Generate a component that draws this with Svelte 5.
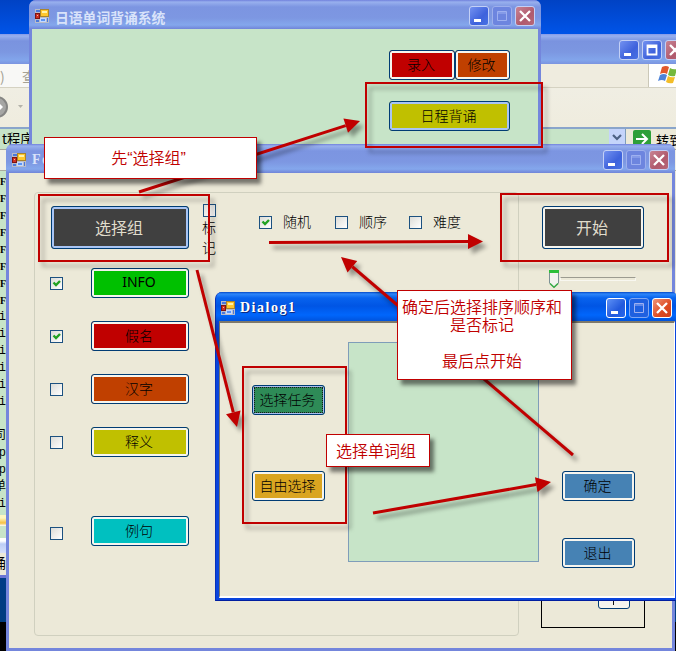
<script>
  const fields = [
    { label: 'INFO', color: '#00c000', checked: true, gap: 23 },
    { label: '假名', color: '#c00000', checked: true, gap: 23 },
    { label: '汉字', color: '#c04000', checked: false, gap: 23 },
    { label: '释义', color: '#c0c000', checked: false, gap: 59 },
    { label: '例句', color: '#00c0c0', checked: false, gap: 0 }
  ];
  const orders = [
    { label: '随机', checked: true },
    { label: '顺序', checked: false },
    { label: '难度', checked: false }
  ];
  const listing = ['F', 'F', 'F', 'F', 'F', 'F', 'F', 'F', 'i', 'i', 'i', 'i', 'i', 'i', '', '司', 'up', 'up', '单', 'bi'];

  // [x1, y1, x2, y2] from tail to tip
  const arrows = [
    [139, 192, 360, 121],
    [269, 242.5, 483, 241.5],
    [573, 455, 341, 257],
    [197, 270, 237, 427],
    [373, 513, 551, 482]
  ].map(([x1, y1, x2, y2]) => {
    const len = Math.hypot(x2 - x1, y2 - y1);
    const ux = (x2 - x1) / len;
    const uy = (y2 - y1) / len;
    const bx = x2 - ux * 15;
    const by = y2 - uy * 15;
    return {
      x1, y1, bx, by,
      head: `${x2},${y2} ${bx - uy * 7.5},${by + ux * 7.5} ${bx + uy * 7.5},${by - ux * 7.5}`
    };
  });
</script>

{#snippet controls(max)}
  <div class="controls">
    <span class="ctl"><svg width="18" height="18"><path d="M4 12h7v3H4z" fill="#fff" /></svg></span>
    <span class="ctl" class:dim={!max}>
      <svg width="18" height="18"><path d="M4.500 4.500h9v9h-9zM4.500 6h9" fill="none" stroke={max ? '#fff' : '#9eb0f0'} stroke-width={max ? 1.8 : 1} /></svg>
    </span>
    <span class="ctl close"><svg width="18" height="18"><path d="M4 4l10 10M14 4L4 14" stroke="#fff" stroke-width="2.300" /></svg></span>
  </div>
{/snippet}

{#snippet titlebar(text, latin)}
  <header class="title">
    <svg class="appicon" width="14" height="14" viewBox="0 0 14 14">
      <rect width="14" height="14" fill="#b9bcc8" />
      <path d="M1 1h4v2H1zM1 11h3v2H1zM12 9h1v4h-1z" fill="#4a78dc" />
      <rect x="5.500" y=".5" width="8" height="7" fill="#ffc72e" stroke="#a9842c" />
      <path d="M7 2h5v2H7z" fill="#fff2a8" />
      <rect x=".5" y="4.500" width="4" height="5" fill="#d03020" stroke="#7c1414" />
      <path d="M2 6h1v1H2z" fill="#ffb0a0" />
      <rect x="5.500" y="9.500" width="5" height="3" fill="#5a94f4" stroke="#c4d8ff" />
    </svg>
    <h1 class:latin>{text}</h1>
    {@render controls(false)}
  </header>
{/snippet}

{#snippet check(on)}
  <span class="check">
    {#if on}
      <svg width="11" height="11"><path d="M2.500 4.500L5 7l4-4" fill="none" stroke="#21a121" stroke-width="2.400" /></svg>
    {/if}
  </span>
{/snippet}

{#snippet button(label, color, kind)}
  <button class={kind} style:background-color={color}>{label}</button>
{/snippet}

<div class="desktop">
  <section class="browser">
    <div class="btitle">{@render controls(true)}</div>
    <div class="menu"><span class="paren">)</span><span>查</span>
      <div class="throbber">
        <svg width="22" height="20" viewBox="0 0 22 20">
          <path d="M4 2q4-2 7 0l-2 7q-3-2-7 0z" fill="#e2582b" /><path d="M12 3q3 2 7 1l-2 7q-4 1-7-1z" fill="#74b83c" />
          <path d="M2 10q4-2 7 0l-2 6q-3-2-7 0z" fill="#4c82d8" /><path d="M10 11q3 2 7 1l-2 6q-4 1-7-1z" fill="#f3bd28" />
        </svg>
      </div>
    </div>
    <div class="tools">
      <svg width="30" height="38">
        <circle cx="-3" cy="19" r="10" fill="#a6a6a4" stroke="#858583" stroke-width="2" />
        <path d="M-3 13l6 6-6 6z" fill="#fff" /><path d="M18 17h5l-2.500 3z" fill="#b4b3aa" />
      </svg>
    </div>
    <div class="address">
      <span class="url">t程序</span>
      <span class="drop"><svg width="16" height="16"><path d="M4 6l4 4 4-4" fill="none" stroke="#4d6185" stroke-width="2.200" /></svg></span>
      <span class="go"><svg width="18" height="18"><path d="M3 9h10M9 4l5 5-5 5" fill="none" stroke="#fff" stroke-width="2" /></svg></span>
      <span class="goto">转到</span>
    </div>
    <div class="gapbar"></div>
    <div class="listing">
      {#each listing as line}<div class="line"><span>{line}</span></div>{/each}
    </div>
    <div class="yellow"></div>
    <div class="scrap"></div>
    <div class="bluebar"></div>
    <div class="status"><span>诵</span></div>
  </section>

  <section class="window main">
    {@render titlebar('日语单词背诵系统', false)}
    <div class="body">
      <div class="pair">
        {@render button('录入', '#c00000', 'w66')}
        {@render button('修改', '#c04000', 'w55')}
      </div>
      {@render button('日程背诵', '#c0c000', 'w121 blue')}
    </div>
  </section>

  <section class="window form">
    {@render titlebar('Form1', true)}
    <div class="body">
      <div class="group">
        <div class="left">
          {@render button('选择组', '#404040', 'big w138 blue')}
          {#each fields as f}
            <div class="row" class:last={f.gap === 0} style:margin-bottom="{f.gap}px">
              {@render check(f.checked)}
              {@render button(f.label, f.color, f.label === 'INFO' ? 'w98 caps' : 'w98')}
            </div>
          {/each}
        </div>
        <div class="mark">{@render check(false)}<span>标记</span></div>
        <div class="orders">
          {#each orders as o}
            <span class="order">{@render check(o.checked)}<span class="name">{o.label}</span></span>
          {/each}
        </div>
      </div>
      <div class="right">
        {@render button('开始', '#404040', 'big w102')}
        <div class="slider">
          <svg width="12" height="20">
            <path d="M1.500 1.500h9v12.500L6 18.500l-4.500-4.500z" fill="#f3f3ef" stroke="#7d9096" />
            <path d="M1 1h10v3H1z" fill="#2cc03a" /><path d="M2 14.500l4 3.800 4-3.800" fill="none" stroke="#3aae48" stroke-width="1.500" />
          </svg>
          <span class="track"></span>
        </div>
        <div class="box">
          <button class="plus" aria-label="add"><svg width="30" height="28"><path d="M11 20.500h8M14.500 16v9" stroke="#111" fill="none" /></svg></button>
        </div>
      </div>
    </div>
  </section>

  <section class="window dialog active">
    {@render titlebar('Dialog1', true)}
    <div class="body">
      <div class="tasks">
        {@render button('选择任务', '#2e8b57', 'w73 focus')}
        {@render button('自由选择', '#daa520', 'w73')}
      </div>
      <div class="panel"></div>
      <div class="actions">
        {@render button('确定', '#4682b4', 'w73')}
        {@render button('退出', '#4682b4', 'w73')}
      </div>
    </div>
  </section>

  <svg class="arrows" width="676" height="651">
    {#each arrows as a}
      <g>
        <line x1={a.x1} y1={a.y1} x2={a.bx} y2={a.by} stroke="#c00000" stroke-width="3" />
        <polygon points={a.head} fill="#c00000" />
      </g>
    {/each}
  </svg>
  <div class="frame f1"></div>
  <div class="frame f2"></div>
  <div class="frame f3"></div>
  <div class="frame f4"></div>
  <div class="note n1">先<q>选择组</q></div>
  <div class="note n2">确定后选择排序顺序和<br />是否标记<br /><br />最后点开始</div>
  <div class="note n3">选择单词组</div>
</div>

<style>
  .desktop {
    position: relative;
    width: 676px;
    height: 651px;
    overflow: hidden;
    background: linear-gradient(#0042c4 0, #0054e8 34px, #003d86 578px, #003d80 622px, #000 622px);
    font: 14px/18px "Noto Sans CJK SC", sans-serif;
    color: #000;
  }
  .desktop * { box-sizing: border-box; }
  svg { display: block; flex: none; }

  .browser {
    position: absolute;
    left: 0;
    top: 34px;
    width: 690px;
    height: 544px;
    background: #ece9d8;
    display: flex;
    flex-direction: column;
    overflow: hidden;
    border-bottom: 3px solid #6a74d4;
  }
  .btitle {
    height: 30px;
    flex: none;
    padding: 6px 5px 0 0;
    display: flex;
    justify-content: flex-end;
    background: linear-gradient(#8399e8, #98b0ee 2px, #7a93df 7px, #7c97e1 18px, #82a5eb 26px, #7b94e0);
  }
  .menu {
    height: 24px;
    flex: none;
    display: flex;
    align-items: center;
    color: #a5a294;
    background: linear-gradient(90deg, #f8f8f6 30px, #efecdf 400px);
    border-bottom: 1px solid #d5d2c2;
  }
  .paren { width: 22px; }
  .throbber {
    margin-left: 612px;
    width: 41px;
    height: 23px;
    padding: 1px 0 0 9px;
    background: #fff;
    border-left: 1px solid #cbc8b8;
  }
  .tools {
    height: 39px;
    flex: none;
    background: linear-gradient(#f0eee3, #efecde);
  }
  .address {
    height: 22px;
    flex: none;
    display: flex;
    align-items: center;
    border-top: 2px solid #8aa5cb;
    background: #ece9d8;
  }
  .url { width: 609px; padding-left: 2px; background: #c7e4c8; height: 20px; line-height: 20px; font-size: 13.3px; }
  .drop { width: 17px; height: 20px; background: #c5d4fb; border-right: 1px solid #7f9db9; }
  .go {
    width: 18px;
    height: 18px;
    margin: 0 5px 0 7px;
    background: #2e9f38;
    border-radius: 2px;
  }
  .goto { font-size: 13px; line-height: 17px; }
  .gapbar { height: 22px; flex: none; background: #f2f0e6; border: solid #aaa89c; border-width: 1px 0; }
  .listing {
    height: 344px;
    flex: none;
    width: 7px;
    padding-top: 2px;
    overflow: hidden;
    background: #c7e4c8;
    font: 12px/17px "Liberation Mono", "Noto Sans CJK SC", monospace;
  }
  .line { height: 17px; width: 6px; display: flex; justify-content: flex-end; }
  .line:nth-child(-n + 8) { font: bold 10px/17px "Liberation Serif", serif; }
  .yellow { height: 11px; flex: none; background: linear-gradient(#fff6c0 3px, #f5c040 8px, #fff); }
  .scrap { height: 12px; flex: none; background: #c7e4c8; }
  .bluebar { height: 15px; flex: none; background: linear-gradient(#fff 3px, #bccdf5 6px, #d5e0fc); }
  .status { flex: 1; width: 6px; display: flex; justify-content: flex-end; overflow: hidden; }

  .window {
    position: absolute;
    display: flex;
    flex-direction: column;
    background: #7486dc;
    border-radius: 7px 7px 0 0;
    overflow: hidden;
  }
  .title {
    height: 29px;
    flex: none;
    display: flex;
    align-items: center;
    padding: 0 6px 0 6px;
    background: linear-gradient(#7181dc, #98b0ee 2px, #7c95e1 7px, #7d97e2 18px, #84a7ec 25px, #7084d8);
  }
  h1 {
    margin: 0 auto 0 6px;
    padding-top: 2px;
    font: bold 13.8px/18px "Noto Sans CJK SC", sans-serif;
    color: #d9e3fa;
    white-space: nowrap;
  }
  h1.latin { font: bold 14px/18px "Liberation Serif", serif; letter-spacing: 1.5px; padding: 0; }
  .controls { display: flex; gap: 3px; }
  .ctl {
    width: 20px;
    height: 20px;
    border: 1px solid #c3d0f6;
    border-radius: 3px;
    background: linear-gradient(135deg, #7391f0, #3e62dc 60%, #4872e4);
  }
  .ctl.dim { background: #6d85df; border-color: #9dafec; }
  .ctl.close { background: linear-gradient(135deg, #c88393, #b05a6d 60%, #b76878); }
  .active .title {
    background: linear-gradient(#0448c6, #2d86fa 2px, #0863ee 6px, #0055e4 14px, #0066fc 23px, #0053dc);
  }
  .active h1 { color: #fff; text-shadow: 1px 1px 0 #0a2a80; }
  .active .ctl { background: linear-gradient(135deg, #5e91f6, #2259dc 60%, #2767ec); border-color: #fff; }
  .active .ctl.dim { background: #1f60e0; border-color: #7fa6f2; }
  .active .ctl.close { background: linear-gradient(135deg, #f09478, #dd4a22 60%, #d0401c); }

  .main { left: 29px; top: 0; width: 512px; height: 150px; }
  .main .title { padding-top: 2px; }
  .main .body {
    margin: 0 3px;
    flex: 1;
    background: #c7e4c8;
    padding: 21px 28px 0 0;
    display: flex;
    flex-direction: column;
    align-items: flex-end;
    gap: 21px;
  }
  .pair { display: flex; }

  .form { left: 6px; top: 144px; width: 669px; height: 507px; }
  .form .title { padding-top: 2px; }
  .form .body {
    flex: 1;
    margin: 0 3px 3px;
    padding-top: 19px;
    padding-left: 25px;
    background: #ece9d8;
    display: flex;
    align-items: flex-start;
  }
  .group {
    width: 485px;
    height: 444px;
    border: 1px solid #d0d0bf;
    border-radius: 4px;
    display: flex;
    align-items: flex-start;
  }
  .left { width: 168px; padding: 13px 0 0 15px; }
  .left :global(.big) { margin: 0 0 19px 1px; }
  .row { display: flex; align-items: flex-start; gap: 28px; padding: 0; }
  .row .check { margin-top: 9px; }
  .row.last .check { margin-top: 11px; }
  .mark { width: 15px; padding-top: 11px; line-height: 20px; display: flex; flex-direction: column; font-weight: 300; }
  .mark > span:last-child { margin-left: -1px; }
  .orders { display: flex; padding: 20px 0 0 41px; }
  .order { display: flex; align-items: center; gap: 11px; height: 18px; margin-right: 24px; }
  .order + .order { margin-right: 22px; }
  .name { padding-bottom: 2px; font-weight: 300; }
  .right { padding: 14px 0 0 23px; display: flex; flex-direction: column; }
  .slider { display: flex; align-items: center; margin: 20px 0 0 6px; height: 20px; }
  .track { width: 76px; height: 4px; border: 1px solid #f8f7f0; border-top-color: #9c9b90; }
  .box {
    width: 104px;
    height: 228px;
    margin: 111px 0 0 -1px;
    border: 1px solid #000;
    display: flex;
    align-items: flex-end;
    justify-content: center;
    padding: 0 0 18px 42px;
  }

  .dialog { left: 215px; top: 292px; width: 463px; height: 309px; background: #0a45dc; border-bottom: 1px solid #001ea0; border-left: 1px solid #0831b8; }
  .dialog .title { padding: 2px 6px 0 5px; }
  .dialog h1 { margin-left: 5px; }
  .dialog .body {
    flex: 1;
    margin: 0 3px 2px;
    background: #ece9d8;
    border: solid;
    border-width: 2px 1px 2px 1px;
    border-color: #7d786a #fff #fff #7d786a;
    display: flex;
    align-items: flex-start;
  }
  .tasks { width: 128px; padding: 62px 0 0 32px; display: flex; flex-direction: column; gap: 56px; }
  .panel { width: 191px; height: 220px; margin-top: 19px; background: #c7e4c8; border: 1px solid #7f9db9; }
  .actions { padding: 148px 0 0 23px; display: flex; flex-direction: column; gap: 37px; }

  button {
    display: block;
    height: 30px;
    padding: 0 2px 2px 0;
    border: 1px solid #003c74;
    border-radius: 3px;
    box-shadow: inset 0 0 0 2px #f6f5ef;
    font: 300 14px/20px "Noto Sans CJK SC", sans-serif;
    color: #000;
    white-space: nowrap;
  }
  button.blue { box-shadow: inset 0 0 0 2px #a9c5f4; }
  button.focus { box-shadow: inset 0 0 0 1px #a9bdf0; outline: 1px dotted #171717; outline-offset: -3px; }
  button.big { height: 43px; font-size: 16px; font-weight: 400; color: #e0ddcc; }
  button.caps { font-family: "Noto Sans", sans-serif; font-weight: 400; }
  .w66 { width: 66px; }
  .w55 { width: 55px; }
  .w121 { width: 121px; }
  .w138 { width: 138px; }
  .w98 { width: 98px; }
  .w102 { width: 102px; }
  .w73 { width: 73px; }
  .plus { width: 32px; padding: 0; background: #f4f3ee; }

  .check {
    display: block;
    flex: none;
    width: 13px;
    height: 13px;
    border: 1px solid #1c5180;
    background: linear-gradient(135deg, #dcdcd7, #fff);
  }

  .arrows { position: absolute; left: 0; top: 0; filter: drop-shadow(4px 5px 2px rgba(0, 0, 0, .38)); }
  .frame {
    position: absolute;
    border: 2px solid #c00000;
    filter: drop-shadow(4px 5px 2px rgba(0, 0, 0, .3));
  }
  .f1 { left: 38px; top: 194px; width: 172px; height: 68px; }
  .f2 { left: 365px; top: 82px; width: 178px; height: 66px; }
  .f3 { left: 500px; top: 193px; width: 169px; height: 69px; }
  .f4 { left: 242px; top: 366px; width: 105px; height: 158px; }
  .note {
    position: absolute;
    background: #fff;
    border: 1px solid #c00000;
    box-shadow: 4px 5px 4px rgba(0, 0, 0, .5);
    color: #c00000;
    font-size: 16px;
    font-weight: 350;
    line-height: 18px;
    text-align: center;
    white-space: nowrap;
  }
  q::before, q::after { font-family: "Liberation Sans", sans-serif; }
  q::before { content: "“"; }
  q::after { content: "”"; }
  .n1 { left: 44px; top: 137px; width: 213px; height: 42px; padding: 10px 4px 0 0; }
  .n2 { left: 397px; top: 290px; width: 175px; height: 90px; padding: 6px 5px 0 0; }
  .n3 { left: 326px; top: 434px; width: 104px; height: 33px; padding: 6px 4px 0 0; }
</style>
